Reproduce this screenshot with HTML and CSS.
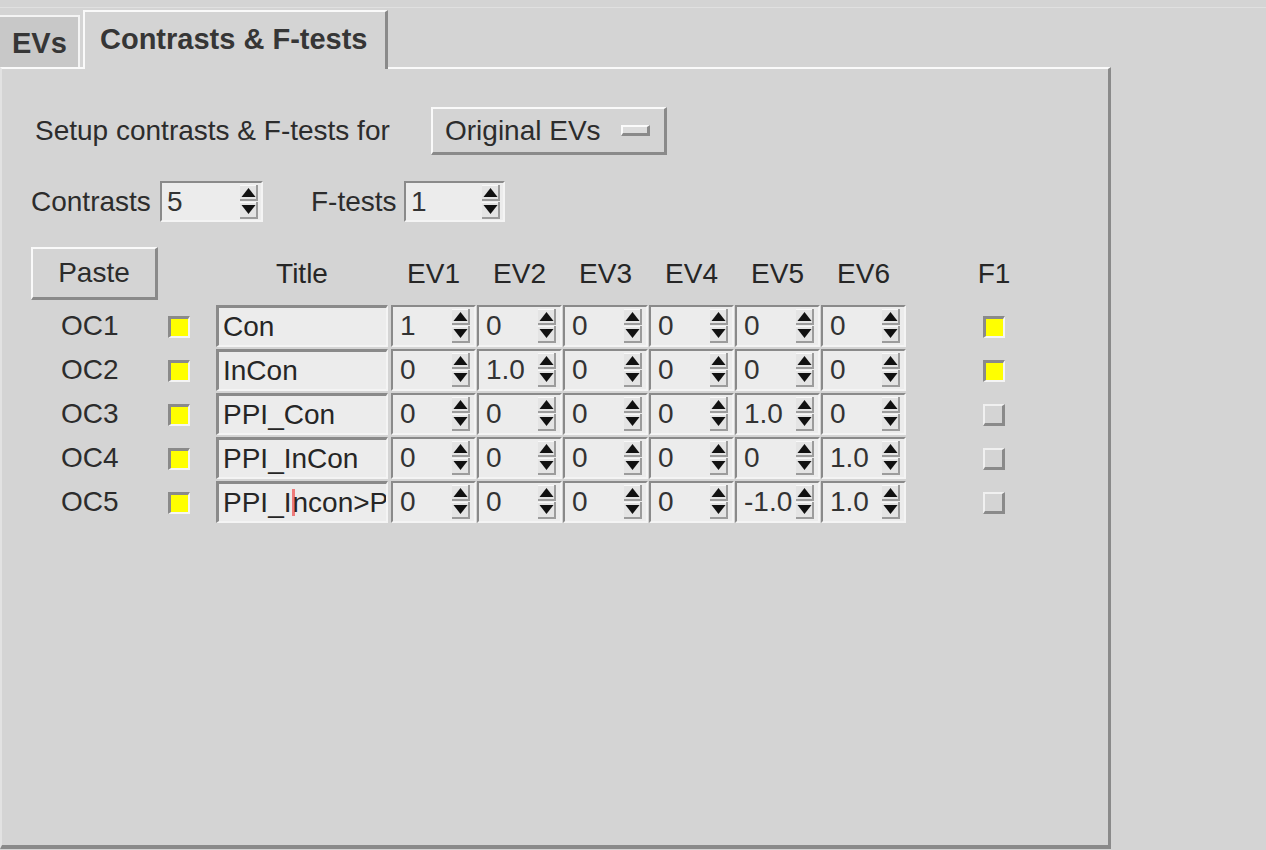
FILE: index.html
```html
<!DOCTYPE html>
<html>
<head>
<meta charset="utf-8">
<link rel="stylesheet" href="styles.css">
</head>
<body>
<svg class="defs" width="0" height="0">
  <symbol id="arr" viewBox="0 0 18 34">
    <rect x="0" y="0" width="18" height="16" fill="#9c9c9c"/>
    <rect x="0" y="0" width="16" height="14" fill="#e4e4e4"/>
    <rect x="0" y="0" width="16" height="1" fill="#f8f8f8"/>
    <polygon points="1.5,12 8.5,3 15.5,12" fill="#111"/>
    <rect x="0" y="17" width="18" height="17" fill="#9c9c9c"/>
    <rect x="0" y="17" width="16" height="15" fill="#e4e4e4"/>
    <rect x="0" y="17" width="16" height="1" fill="#f8f8f8"/>
    <polygon points="1.5,20 8.5,29 15.5,20" fill="#111"/>
  </symbol>
</svg>
<div class="winline"></div>
<div class="tabs">
  <div class="tab evs">EVs</div>
  <div class="tab sel">Contrasts &amp; F-tests</div>
</div>
<div class="panel">
  <div class="setup-row">
    <span class="setup-label">Setup contrasts &amp; F-tests for</span>
    <div class="optmenu"><span>Original EVs</span><span class="ind"></span></div>
  </div>
  <div class="count-row">
    <span class="lbl-contrasts">Contrasts</span>
    <div class="spin small w103"><span class="val">5</span><svg class="arrows"><use href="#arr"/></svg></div>
    <span class="lbl-ftests">F-tests</span>
    <div class="spin small w101"><span class="val">1</span><svg class="arrows"><use href="#arr"/></svg></div>
  </div>
  <div class="grid">
    <div class="btn paste">Paste</div>
    <div></div>
    <div class="hdr title-h">Title</div>
    <div class="hdr">EV1</div>
    <div class="hdr">EV2</div>
    <div class="hdr">EV3</div>
    <div class="hdr">EV4</div>
    <div class="hdr">EV5</div>
    <div class="hdr">EV6</div>
    <div></div>
    <div class="hdr f-h">F1</div>

    <div class="oc">OC1</div>
    <div class="cb"></div>
    <div class="entry">Con</div>
    <div class="spin"><span class="val">1</span><svg class="arrows"><use href="#arr"/></svg></div>
    <div class="spin"><span class="val">0</span><svg class="arrows"><use href="#arr"/></svg></div>
    <div class="spin"><span class="val">0</span><svg class="arrows"><use href="#arr"/></svg></div>
    <div class="spin"><span class="val">0</span><svg class="arrows"><use href="#arr"/></svg></div>
    <div class="spin"><span class="val">0</span><svg class="arrows"><use href="#arr"/></svg></div>
    <div class="spin"><span class="val">0</span><svg class="arrows"><use href="#arr"/></svg></div>
    <div></div>
    <div class="cb f"></div>

    <div class="oc">OC2</div>
    <div class="cb"></div>
    <div class="entry">InCon</div>
    <div class="spin"><span class="val">0</span><svg class="arrows"><use href="#arr"/></svg></div>
    <div class="spin"><span class="val">1.0</span><svg class="arrows"><use href="#arr"/></svg></div>
    <div class="spin"><span class="val">0</span><svg class="arrows"><use href="#arr"/></svg></div>
    <div class="spin"><span class="val">0</span><svg class="arrows"><use href="#arr"/></svg></div>
    <div class="spin"><span class="val">0</span><svg class="arrows"><use href="#arr"/></svg></div>
    <div class="spin"><span class="val">0</span><svg class="arrows"><use href="#arr"/></svg></div>
    <div></div>
    <div class="cb f"></div>

    <div class="oc">OC3</div>
    <div class="cb"></div>
    <div class="entry">PPI_Con</div>
    <div class="spin"><span class="val">0</span><svg class="arrows"><use href="#arr"/></svg></div>
    <div class="spin"><span class="val">0</span><svg class="arrows"><use href="#arr"/></svg></div>
    <div class="spin"><span class="val">0</span><svg class="arrows"><use href="#arr"/></svg></div>
    <div class="spin"><span class="val">0</span><svg class="arrows"><use href="#arr"/></svg></div>
    <div class="spin"><span class="val">1.0</span><svg class="arrows"><use href="#arr"/></svg></div>
    <div class="spin"><span class="val">0</span><svg class="arrows"><use href="#arr"/></svg></div>
    <div></div>
    <div class="cb f off"></div>

    <div class="oc">OC4</div>
    <div class="cb"></div>
    <div class="entry">PPI_InCon</div>
    <div class="spin"><span class="val">0</span><svg class="arrows"><use href="#arr"/></svg></div>
    <div class="spin"><span class="val">0</span><svg class="arrows"><use href="#arr"/></svg></div>
    <div class="spin"><span class="val">0</span><svg class="arrows"><use href="#arr"/></svg></div>
    <div class="spin"><span class="val">0</span><svg class="arrows"><use href="#arr"/></svg></div>
    <div class="spin"><span class="val">0</span><svg class="arrows"><use href="#arr"/></svg></div>
    <div class="spin"><span class="val">1.0</span><svg class="arrows"><use href="#arr"/></svg></div>
    <div></div>
    <div class="cb f off"></div>

    <div class="oc">OC5</div>
    <div class="cb"></div>
    <div class="entry">PPI_I<span class="cursor"></span>ncon&gt;P</div>
    <div class="spin"><span class="val">0</span><svg class="arrows"><use href="#arr"/></svg></div>
    <div class="spin"><span class="val">0</span><svg class="arrows"><use href="#arr"/></svg></div>
    <div class="spin"><span class="val">0</span><svg class="arrows"><use href="#arr"/></svg></div>
    <div class="spin"><span class="val">0</span><svg class="arrows"><use href="#arr"/></svg></div>
    <div class="spin"><span class="val">-1.0</span><svg class="arrows"><use href="#arr"/></svg></div>
    <div class="spin"><span class="val">1.0</span><svg class="arrows"><use href="#arr"/></svg></div>
    <div></div>
    <div class="cb f off"></div>
  </div>
</div>
</body>
</html>
```

FILE: styles.css
```css
* { box-sizing: border-box; }
html, body {
  margin: 0;
  padding: 0;
  background: #d4d4d4;
  width: 1266px;
  height: 850px;
  overflow: hidden;
  font-family: "Liberation Sans", Arial, sans-serif;
  color: #2c2c2c;
  font-size: 28px;
}
.defs { position: absolute; width: 0; height: 0; overflow: hidden; }
.winline {
  margin-top: 7px;
  height: 1px;
  background: #e0e0e0;
}
.tabs {
  height: 59px;
  display: flex;
  align-items: flex-end;
}
.tab {
  display: flex;
  align-items: center;
  font-weight: bold;
  font-size: 29px;
  color: #363636;
}
.tab.evs {
  width: 80px;
  height: 52px;
  background: #c8c8c8;
  border-top: 2px solid #f4f4f4;
  border-right: 2px solid #f4f4f4;
  padding-left: 12px;
  padding-top: 2px;
}
.tab.sel {
  position: relative;
  z-index: 1;
  margin-left: 3px;
  width: 305px;
  height: 59px;
  margin-bottom: -2px;
  background: #d4d4d4;
  border-top: 2px solid #fafafa;
  border-left: 2px solid #fafafa;
  border-right: 3px solid #8a8a8a;
  padding-left: 15px;
  padding-bottom: 2px;
}
.panel {
  width: 1111px;
  height: 782px;
  border-top: 2px solid #fafafa;
  border-left: 2px solid #e2e2e2;
  border-right: 3px solid #8a8a8a;
  border-bottom: 4px solid #8a8a8a;
  padding-top: 38px;
}
.setup-row {
  display: flex;
  align-items: center;
  height: 48px;
  padding-left: 33px;
}
.setup-label { width: 396px; }
.optmenu {
  width: 236px;
  height: 48px;
  display: flex;
  align-items: center;
  justify-content: space-between;
  border-style: solid;
  border-width: 2px 3px 3px 2px;
  border-color: #fafafa #8a8a8a #8a8a8a #fafafa;
  padding: 0 14px 0 12px;
}
.ind {
  width: 29px;
  height: 11px;
  border-style: solid;
  border-width: 2px 3px 3px 2px;
  border-color: #fafafa #8a8a8a #8a8a8a #fafafa;
  background: #dcdcdc;
}
.count-row {
  margin-top: 26px;
  height: 41px;
  display: flex;
  align-items: center;
  padding-left: 29px;
}
.lbl-contrasts { width: 129px; }
.lbl-ftests { width: 93px; margin-left: 48px; }
.spin {
  width: 85px;
  height: 42px;
  display: flex;
  align-items: center;
  justify-content: space-between;
  border-style: solid;
  border-width: 2px;
  border-color: #8a8a8a #f4f4f4 #f4f4f4 #8a8a8a;
  background: #ececec;
  padding: 0 4px 0 7px;
  color: #333;
}
.spin.small { height: 41px; padding: 0 3px 0 5px; }
.w103 { width: 103px; }
.w101 { width: 101px; }
.arrows { width: 18px; height: 34px; display: block; }
.grid {
  margin-top: 25px;
  padding-left: 29px;
  display: grid;
  grid-template-columns: 137px 48px 175px repeat(6, 86px) 76px 22px;
  grid-template-rows: 58px repeat(5, 44px);
  align-items: start;
}
.btn.paste {
  width: 127px;
  height: 53px;
  display: flex;
  align-items: center;
  justify-content: center;
  border-style: solid;
  border-width: 2px 3px 3px 2px;
  border-color: #fafafa #8a8a8a #8a8a8a #fafafa;
}
.hdr {
  height: 53px;
  width: 85px;
  display: flex;
  align-items: center;
  justify-content: center;
  color: #262626;
}
.hdr.title-h { width: 172px; }
.hdr.f-h { width: 22px; }
.oc {
  height: 42px;
  display: flex;
  align-items: center;
  padding-left: 30px;
}
.cb {
  width: 22px;
  height: 22px;
  margin-top: 11px;
  border-style: solid;
  border-width: 3px 2px 2px 3px;
  border-color: #8a8a8a #f4f4f4 #f4f4f4 #8a8a8a;
  background: #ffff00;
}
.cb.off {
  border-width: 2px 3px 3px 2px;
  border-color: #f0f0f0 #8a8a8a #8a8a8a #f0f0f0;
  background: #d4d4d4;
}
.entry {
  width: 172px;
  height: 42px;
  display: flex;
  align-items: center;
  white-space: nowrap;
  overflow: hidden;
  border-style: solid;
  border-width: 3px 2px 2px 3px;
  border-color: #8a8a8a #f4f4f4 #f4f4f4 #8a8a8a;
  background: #ececec;
  padding-left: 4px;
  color: #262626;
}
.cursor {
  display: inline-block;
  flex: none;
  width: 3px;
  height: 27px;
  background: #ee7b7b;
  margin-left: 1px;
  margin-right: -3px;
}
```
